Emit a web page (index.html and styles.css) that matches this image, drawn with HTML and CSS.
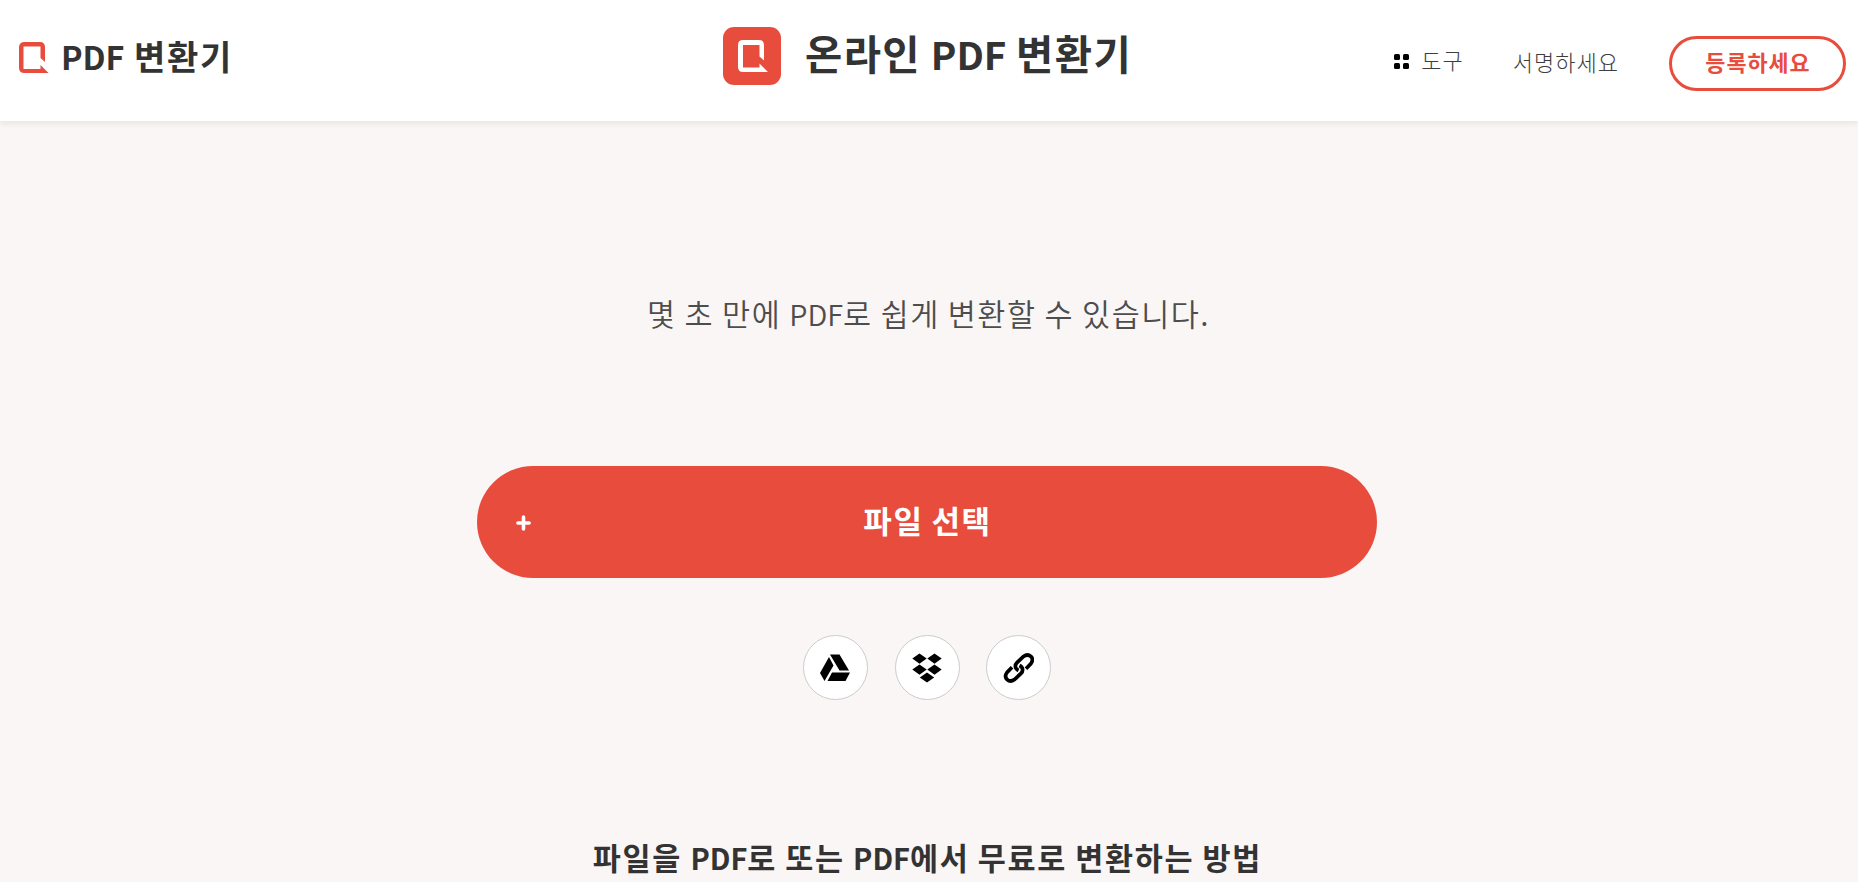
FILE: index.html
```html
<!DOCTYPE html>
<html lang="ko">
<head>
    <meta charset="UTF-8">
    <meta name="viewport" content="width=device-width, initial-scale=1.0">
    <title>온라인 PDF 변환기</title>
    <link rel="stylesheet" href="styles.css">
</head>
<body>

    <header class="header">
        <a class="brand" href="#">
            <svg class="brand-icon" width="30" height="32" viewBox="0 0 30 32">
                <path d="M21 31H5.500Q0 31 0 26V5.500Q0 0 5.500 0H21Q26 0 26 5.500V20L21.500 16V4.500H4.500V27H21.500V23L29.500 31Z" fill="#e84c3d"/>
            </svg>
            <span class="brand-name"><span class="latin">PDF</span> 변환기</span>
        </a>
        <div class="page-title">
            <svg class="title-icon" width="58" height="58" viewBox="0 0 58 58">
                <rect width="58" height="58" rx="11" fill="#e84c3d"/>
                <path d="M37 45H20Q15 45 15 40V18Q15 13 20 13H36Q41 13 41 18V33.500L36.500 29.500V18H20V40.500H36.500V36.500L45 45Z" fill="#fff"/>
            </svg>
            <h1>온라인 <span class="latin">PDF</span> 변환기</h1>
        </div>
        <nav class="nav">
            <a class="tools" href="#">
                <svg width="15" height="15" viewBox="0 0 15 15">
                    <rect width="6" height="6" rx="1.500"/>
                    <rect x="9" width="6" height="6" rx="1.500"/>
                    <rect y="9" width="6" height="6" rx="1.500"/>
                    <rect x="9" y="9" width="6" height="6" rx="1.500"/>
                </svg>
                <span>도구</span>
            </a>
            <a class="login" href="#">서명하세요</a>
            <a class="signup" href="#">등록하세요</a>
        </nav>
    </header>

    <main class="main">
        <p class="subtitle">몇 초 만에 <span class="latin">PDF</span>로 쉽게 변환할 수 있습니다.</p>

        <button class="upload">
            <svg class="plus" width="15" height="16" viewBox="0 0 15 16">
                <path d="M7.500 2V14M1.900 8H13.100" stroke="#fff" stroke-width="3.600" stroke-linecap="round"/>
            </svg>
            <span>파일 선택</span>
        </button>

        <div class="sources">
            <a class="source" href="#">
                <svg width="31" height="28" viewBox="0 0 31 28">
                    <path d="M10 0.500H19.500L29 16.500H19.500ZM9 3L13.500 11.500L4.500 27L0 19ZM12 18.500H30L25.500 27H7.500Z"/>
                </svg>
            </a>
            <a class="source" href="#">
                <svg width="30" height="30" viewBox="0 0 30 30">
                    <path d="M7.500 0.500L14.700 5.600L7.500 10.700L0.300 5.600ZM22.500 0.500L29.700 5.600L22.500 10.700L15.300 5.600ZM7.500 11.500L14.700 16.600L7.500 21.700L0.300 16.600ZM22.500 11.500L29.700 16.600L22.500 21.700L15.300 16.600ZM15 19.500L22.200 24.500L15 29.500L7.800 24.500Z"/>
                </svg>
            </a>
            <a class="source" href="#">
                <svg width="31" height="30" viewBox="-1 0 31 30" fill="none" stroke="#000" stroke-width="3.700">
                    <path d="M14.500 17.500C10.500 15.500 10.800 11.800 13 9.600L19.500 3.500C25 -0.500 31 5 27 10.500L22 15.800"/>
                    <path d="M15.500 12.500C19.500 14.500 19.200 18.200 17 20.400L10.500 26.500C5 30.500 -1 25 3 19.500L8 14.200"/>
                </svg>
            </a>
        </div>

        <h2>파일을 <span class="latin">PDF</span>로 또는 <span class="latin">PDF</span>에서 무료로 변환하는 방법</h2>
    </main>

</body>
</html>
```
FILE: styles.css
```css
body {
    margin: 0;
    background-color: #faf6f5;
    color: #333;
    font-family: "Noto Sans CJK KR", sans-serif;
    height: 882px;
    overflow: hidden;
}

a {
    color: inherit;
    text-decoration: none;
}

h1, h2, p {
    margin: 0;
    white-space: nowrap;
}

.latin {
    font-size: 0.95em;
    line-height: 1;
    letter-spacing: 0;
}

.header {
    display: grid;
    grid-template-columns: 704px 1fr auto;
    align-items: start;
    height: 121px;
    box-sizing: border-box;
    padding: 0 12px 0 19px;
    background-color: #fff;
    box-shadow: 0 4px 4px rgba(0, 0, 0, 0.05);
}

.brand {
    display: flex;
    align-items: center;
    gap: 12px;
    padding-top: 42px;
    height: 32px;
}

.brand-name {
    padding-bottom: 5px;
    font-size: 34px;
    font-weight: 700;
    letter-spacing: 1.600px;
    word-spacing: -1.500px;
}

.page-title {
    display: flex;
    align-items: center;
    gap: 24px;
    padding-top: 27px;
    height: 58px;
}

h1 {
    padding-bottom: 7px;
    font-size: 40.500px;
    font-weight: 600;
    letter-spacing: 1.400px;
    word-spacing: -3px;
}

.nav {
    display: flex;
    align-items: center;
    justify-content: flex-end;
    padding-top: 36px;
    color: #3d3d3d;
    font-size: 22px;
    letter-spacing: 1px;
    font-weight: 300;
}

.tools {
    display: flex;
    align-items: center;
    gap: 12px;
    margin-right: 49px;
    padding-bottom: 4px;
}

.tools span {
    padding-bottom: 6px;
}

.login {
    margin-right: 50px;
    padding-bottom: 6px;
}

.signup {
    display: flex;
    align-items: center;
    justify-content: center;
    width: 177px;
    height: 55px;
    box-sizing: border-box;
    padding-bottom: 5px;
    padding-left: 1px;
    border: 3px solid #e84c3d;
    border-radius: 28px;
    color: #e84c3d;
    font-size: 21.800px;
    font-weight: 600;
}

.main {
    display: flex;
    flex-direction: column;
    align-items: center;
    padding-right: 4px;
}

.subtitle {
    height: 44px;
    margin-top: 170px;
    padding-left: 3px;
    font-size: 30.500px;
    line-height: 44px;
    font-weight: 350;
    color: #4d4d4d;
    letter-spacing: 1.500px;
    word-spacing: -2px;
}

.upload {
    display: grid;
    grid-template-columns: 15px 1fr 15px;
    align-items: center;
    width: 900px;
    height: 112px;
    margin-top: 131px;
    padding: 0 39px;
    border: none;
    border-radius: 56px;
    background-color: #e84c3d;
    color: #fff;
    font-family: inherit;
    font-size: 31px;
    font-weight: 600;
    letter-spacing: 1.500px;
    word-spacing: -2px;
    cursor: pointer;
}

.upload span {
    padding-bottom: 5px;
    padding-left: 1px;
}

.plus {
    padding-top: 1px;
}

.sources {
    display: flex;
    gap: 26.500px;
    margin-top: 57px;
}

.source {
    display: flex;
    align-items: center;
    justify-content: center;
    width: 65px;
    height: 65px;
    box-sizing: border-box;
    border: 1px solid #ccc;
    border-radius: 50%;
    background-color: #fff;
}

h2 {
    margin-top: 135px;
    padding-left: 1px;
    font-size: 30.500px;
    line-height: 44px;
    font-weight: 600;
    letter-spacing: 1.700px;
    word-spacing: -2px;
}
```
